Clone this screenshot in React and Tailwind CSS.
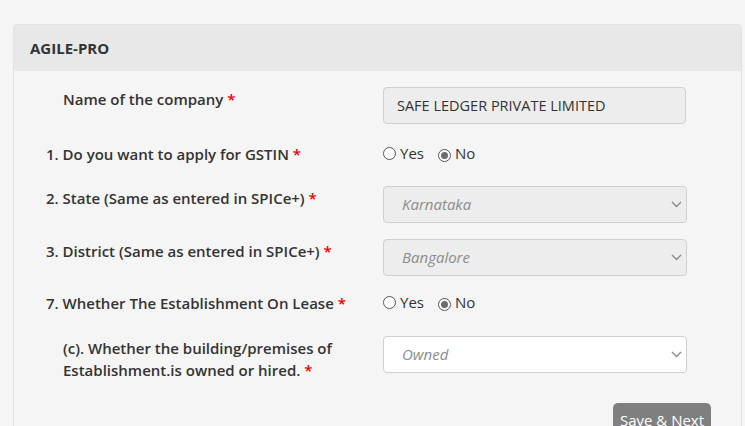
function Chevron() {
  return (
    <svg width="11" height="7" viewBox="0 0 11 7" className="shrink-0">
      <path d="M1 1l4.5 4.5L10 1" fill="none" stroke="#8a8a8a" strokeWidth="1.4" />
    </svg>
  )
}

function Radio({ checked }) {
  return (
    <span className="relative inline-flex h-[13px] w-[13px] items-center justify-center rounded-full border border-[#555] bg-white">
      {checked && <span className="h-[7px] w-[7px] rounded-full bg-[#6d6d6d]" />}
    </span>
  )
}

function Label({ children, indent = false }) {
  return (
    <div
      className={`w-[337px] shrink-0 pt-[1px] text-[15px] font-semibold leading-[22px] text-[#333] ${
        indent ? 'pl-[17px] pr-[40px]' : ''
      }`}
    >
      {children} <span className="text-[#e00]">*</span>
    </div>
  )
}

function YesNo() {
  return (
    <div className="flex h-[20px] items-center text-[15px] text-[#333]">
      <Radio />
      <span className="ml-[4px]">Yes</span>
      <span className="ml-[14px]">
        <Radio checked />
      </span>
      <span className="ml-[4px]">No</span>
    </div>
  )
}

function Select({ value, disabled = true }) {
  return (
    <div
      className={`flex h-[37px] w-[304px] items-center justify-between rounded-[4px] border border-[#cfcfcf] pl-[18px] pr-[4px] text-[15px] italic text-[#8c8c8c] ${
        disabled ? 'bg-[#ededed]' : 'bg-white'
      }`}
    >
      <span>{value}</span>
      <Chevron />
    </div>
  )
}

export default function App() {
  return (
    <div
      className="h-[426px] overflow-hidden bg-[#f5f5f5] pl-[13px] pr-[3px] pt-[24px]"
      style={{ fontFamily: '"Open Sans", "Noto Sans", Arial, sans-serif' }}
    >
      <div className="rounded-t-[4px] border border-[#e2e2e2] bg-[#f5f5f5]">
        <div className="flex h-[46px] items-center bg-[#e8e8e8] px-[16px] text-[15px] font-bold text-[#333]">
          AGILE-PRO
        </div>
        <div className="pl-[32px] pt-[16px] pb-[20px]">
          <div className="flex items-start">
            <Label indent>Name of the company</Label>
            <div className="flex h-[37px] w-[303px] items-center rounded-[4px] border border-[#cfcfcf] bg-[#ededed] px-[13px] text-[14.5px] text-[#333]">
              SAFE LEDGER PRIVATE LIMITED
            </div>
          </div>

          <div className="mt-[18px] flex items-center">
            <Label>1. Do you want to apply for GSTIN</Label>
            <YesNo />
          </div>

          <div className="mt-[21px] flex items-start">
            <Label>2. State (Same as entered in SPICe+)</Label>
            <Select value="Karnataka" />
          </div>

          <div className="mt-[16px] flex items-start">
            <Label>3. District (Same as entered in SPICe+)</Label>
            <Select value="Bangalore" />
          </div>

          <div className="mt-[15px] flex items-center">
            <Label>7. Whether The Establishment On Lease</Label>
            <YesNo />
          </div>

          <div className="mt-[22px] flex items-start">
            <Label indent>(c). Whether the building/premises of Establishment.is owned or hired.</Label>
            <Select value="Owned" disabled={false} />
          </div>

          <div className="mt-[22px] flex justify-end pr-[30px]">
            <button className="h-[34px] w-[98px] rounded-[5px] bg-[#7f7f7f] text-[15px] text-white">
              Save &amp; Next
            </button>
          </div>
        </div>
      </div>
    </div>
  )
}
